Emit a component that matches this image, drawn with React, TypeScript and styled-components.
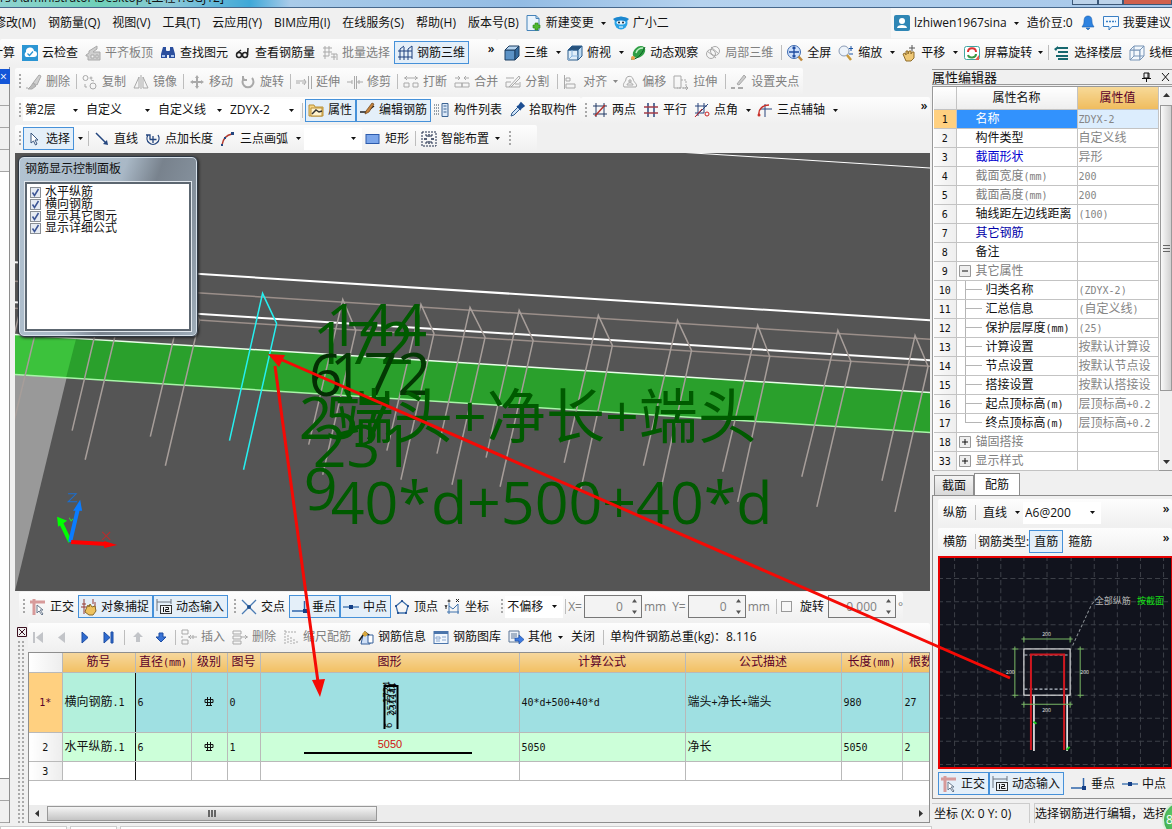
import React from "react";
import styled, { createGlobalStyle } from "styled-components";

const UI = '"Open Sans", "Noto Sans CJK SC", sans-serif';

const Global = createGlobalStyle`
  * { box-sizing: border-box; }
  html, body { margin: 0; padding: 0; }
  body { font: 12px/16px ${UI}; color: #111; background: #f0f0f0; overflow: hidden; }
  button, input, select { font: inherit; color: inherit; margin: 0; padding: 0; border: 0; background: none; border-radius: 0; }
`;

/* ---------- icons ---------- */

const G = "#a9a9a9";
const B = "#1f4e8c";

const icons: Record<string, React.ReactNode> = {
  cloud: (<><rect width="16" height="16" fill="#2b95d3" /><path d="M4 12a3 3 0 0 1 0-5 4 4 0 0 1 8-1 3 3 0 0 1 0 6z" fill="#fff" /><path d="M5.500 8.500l2 2 3.500-4" stroke="#2b95d3" fill="none" strokeWidth="1.300" /></>),
  slab: (<path d="M1 10l3-2V6l8-5v3l-4 3h7v8H3v-4H1zM6 10v3h3v-3zM11 10v3h2v-3z" fill="#cfcfcf" stroke={G} />),
  binoc: (<g fill="#2b4f9e"><path d="M3 2h3v3l1 2v6H1V9z" /><path d="M13 2h-3v3L9 7v6h6V9z" /><rect x="6" y="6" width="4" height="4" /><path d="M2 10h3v2H2zM11 10h3v2h-3z" fill="#a9c4f0" /></g>),
  glasses: (<g fill="none" stroke="#222" strokeWidth="1.500"><circle cx="4" cy="10" r="2.500" /><circle cx="10" cy="10" r="2.500" /><path d="M6 9.500h2M12.500 10L13 3M2 8l4-3" /></g>),
  batch: (<g fill="none" stroke={G}><path d="M1 3h9M1 7h9M1 11h6M3 1v13M7 1v10M9 9h6v6M9 12h5M12 9v6" /></g>),
  rebar3d: (<g fill="none" stroke="#1c3f7c"><path d="M1 6h14M1 12h14M3 4v11M7 2v13M11 4v11M15 1v13M3 4L7 1M11 4l4-3" /></g>),
  cube: (<g stroke="#1d3f63"><path d="M1 5h10v10H1z" fill="#5b92c6" /><path d="M1 5l4-4h10l-4 4z" fill="#b5d3ee" /><path d="M11 5l4-4v10l-4 4z" fill="#346a9e" /></g>),
  cubetop: (<g stroke="#2b5c8c"><path d="M1 5h10v10H1z" fill="#dfeefa" /><path d="M1 5l4-4h10l-4 4z" fill="#28527c" /><path d="M11 5l4-4v10l-4 4z" fill="#bfdcf4" /><path d="M5 5v6h6M5 11l-4 4" fill="none" stroke="#88b4dd" /></g>),
  orbit: (<><ellipse cx="9" cy="7" rx="7" ry="5" transform="rotate(-40 9 7)" fill="#2f9e44" /><path d="M6 8c1-3 4-5 7-5" stroke="#bff0c5" strokeWidth="1.500" fill="none" /><path d="M1 14c5 1 10-3 14-12" fill="none" stroke="#0d5e24" /><circle cx="3" cy="13" r="2" fill="#e8a14a" /></>),
  local3d: (<g fill="none" stroke={G}><circle cx="6" cy="9" r="4.500" /><circle cx="10" cy="6" r="4.500" /><path d="M2 6l9 7M6 2l8 7" /></g>),
  full: (<><circle cx="7" cy="7" r="6.500" fill="#cfe1fb" stroke="#3d6ab0" /><path d="M7 2v10M2 7h10M5.500 3.500L7 2l1.500 1.500M5.500 10.500L7 12l1.500-1.500" stroke="#1d4aa0" strokeWidth="1.300" fill="none" /><path d="M11.500 11.500l3.500 4" stroke="#c08a3c" strokeWidth="2.500" /></>),
  zoom: (<><circle cx="6" cy="6" r="5" fill="#edf3fa" stroke="#8a9bb5" /><path d="M9 10l4 5" stroke="#c99a3c" strokeWidth="2.500" /><path d="M13 1v5M11 3.500h4M11 9h4" stroke="#1b55a5" fill="none" /></>),
  pan: (<><path d="M2 9l2-1 1 2V6h2v3l1-3h2v3l1-2h2v6l-3 3H5z" fill="#efc875" stroke="#8f6d2b" /><path d="M8 3h6M11 0v6" stroke="#555" /></>),
  rotate3d: (<><rect x=".5" y="1.500" width="15" height="13" rx="2" fill="#fff" stroke="#3fa6a2" /><path d="M4 7c0-5 8-5 8 0" fill="none" stroke="#d33" strokeWidth="2" /><path d="M12 9c0 4-7 5-8 1" fill="none" stroke="#3a9a45" strokeWidth="2" /><path d="M11 15l4-5v5z" fill="#e65a4c" /></>),
  floors: (<path d="M3 2h11v2H3zM4 6h10v2H4zM2 10h12v2H2zM4 13h10v2H4zM0 4l4-3v2L2 6z" fill="#17686f" />),
  wire: (<g fill="#f3f8fd" stroke="#7895b7"><path d="M1 5h10v10H1z" /><path d="M1 5l4-4h10l-4 4zM11 5l4-4v10l-4 4z" /><path d="M5 1v10h10M5 11l-4 4" fill="none" /></g>),
  brush: (<><path d="M7 9l6-8 2 1-4 9z" fill="#d0d0d0" stroke={G} /><path d="M7 9l3 3-4 3H2l3-3zM0 14h2" stroke={G} fill="#bbb" /></>),
  copy: (<g fill="none" stroke={G}><circle cx="3.500" cy="4" r="2.500" /><circle cx="11" cy="12" r="3" /><circle cx="9" cy="4" r="1" /><path d="M3 10v3h2M9 6l3 1" /></g>),
  mirror: (<g fill="none" stroke={G}><path d="M6 3v11H1zM10 3v11h5zM8 1v14" /></g>),
  move: (<path d="M8 1l2 3H9v3h3V6l3 2-3 2V9H9v3h1l-2 3-2-3h1V9H4v1L1 8l3-2v1h3V4H6z" fill={G} />),
  rotate: (<path d="M4 4a5.500 5.500 0 1 0 8 0M3 2v4h4" fill="none" stroke={G} strokeWidth="2" />),
  extend: (<g fill="none" stroke={G}><path d="M0 7h9M0 9h4M6 9h3M8 5l2 3-2 3M12.500 2v13M15.500 2v13" /></g>),
  trim: (<g fill="none" stroke={G}><path d="M0 8h5M10 8h6M7.500 2v13M9.500 2v13M5 6v4M12 6v4" /></g>),
  brk: (<g fill="none" stroke={G}><path d="M1 4h14M1 9h5v4H1zM10 9h5v4h-5zM4 2L2 4l2 2M12 2l2 2-2 2" /></g>),
  merge: (<g fill="none" stroke={G}><path d="M1 4h5M10 4h5M1 9h7v4H1zM8 9h7v4H8zM4 2l2 2-2 2M12 2l-2 2 2 2" /></g>),
  split: (<g fill="none" stroke={G}><path d="M1 4h8M1 13V8h5M1 13h14V8M4 13L14 2l1 2-9 9M10 10h4" /></g>),
  align: (<g fill="none" stroke={G}><path d="M1.500 1v14M3 4h4v3H3zM3 10h9v4H3z" /></g>),
  offset: (<g fill="none" stroke={G}><path d="M2 13c-2-4 2-5 2-8s6-4 7 0 5 5 3 8z" /><path d="M5 11c0-3 6-3 6 0zM7 6h2v2H7z" /></g>),
  stretch: (<g fill="none" stroke={G}><path d="M1 2h7v12H1z" /><path d="M8 6h5v8H4" strokeDasharray="2 1" /><path d="M10 14h5M13 12l2 2-2 2" /></g>),
  grip: (<><path d="M6 10l7-9 2 2-7 8z" fill="#ccc" stroke={G} /><path d="M0 14h4M7 14h5" stroke={G} strokeWidth="2" /></>),
  prop: (<><path d="M1 3h5l1 2h8v9H1z" fill="#f7d684" stroke="#b98f36" /><path d="M3 6h11v8H3z" fill="#fff3cd" stroke="#b98f36" /><path d="M4 12l4-4 3 2 3-1" stroke="#333" fill="none" strokeWidth="1.500" /></>),
  edit: (<><path d="M1 10h6l8-6" stroke="#222" fill="none" strokeWidth="1.500" /><path d="M7 9l6-8 2 1-5 8-4 2z" fill="#c7843d" stroke="#6a4116" strokeWidth=".7" /></>),
  list: (<g fill="none"><path d="M0 3h5M0 6h5M0 9h5M0 12h5" stroke="#345" strokeDasharray="1 1" /><path d="M8 1.500h6v13H8z" fill="#dce9f8" stroke="#3b6393" /><path d="M9.500 4h3M9.500 7h3M9.500 10h3" stroke="#3b6393" /></g>),
  picker: (<><path d="M2 14l1-3 6-6 2 2-6 6z" fill="#cfe3f8" stroke="#305c8e" /><path d="M8 4l4 4M9 5l3-4 3 3-4 3z" fill="#1d4f93" stroke="#1d4f93" strokeWidth="1.500" /></>),
  twopt: (<g fill="none" stroke="#223a66"><path d="M1 4h14M1 12h14M4 1v14M12 1v14" /><path d="M3 14L13 3" stroke="#b3342e" strokeWidth="1.500" /></g>),
  para: (<g fill="none"><path d="M5 1v14M11 1v14" stroke="#28457d" strokeWidth="1.500" /><path d="M1 5h14M1 11h14" stroke="#a33b48" strokeWidth="1.500" /></g>),
  ptang: (<g fill="none" stroke="#28457d"><path d="M1 4h12M1 11h9M4 1v13M10 1v10M2 14L14 2" /><circle cx="13" cy="12" r="2" stroke="#c22" /><path d="M1 15L8 7" stroke="#c22" /></g>),
  arcaxis: (<g fill="none"><path d="M8 2v13M3 7h12" stroke="#28457d" /><path d="M2 13C1 7 6 3 12 3" stroke="#c9302a" strokeWidth="1.500" /><circle cx="2" cy="13" r="1.500" fill="#c9302a" /></g>),
  cursor: (<path d="M5 2v10l2.500-2 2 4 1.500-1-2-4h3z" fill="#fff" stroke="#39567f" />),
  line: (<><path d="M2 2l10 10" stroke="#24467f" strokeWidth="1.500" /><path d="M14 14l-5-1 4-4z" fill="#24467f" /></>),
  ptlen: (<g fill="none" stroke="#24467f" strokeWidth="1.300"><path d="M3 4a6 6 0 1 0 10 0M1 4h4v4" /><path d="M8 5v7M4.500 8.500h7" /></g>),
  arc3: (<g fill="none"><path d="M2 14C3 8 6 4 12 3" stroke="#b33a2e" strokeWidth="1.500" /><rect x="11" y="1" width="3" height="3" fill="#24467f" /><rect x="1" y="13" width="2" height="2" fill="#24467f" /><rect x="4" y="6" width="2" height="2" fill="#24467f" /></g>),
  rect: (<rect x="1" y="3.500" width="13" height="9" fill="#7ca6ea" stroke="#2d5bab" />),
  smart: (<g fill="none" stroke="#1f2d4a"><rect x="1" y="1" width="14" height="14" strokeDasharray="2 1" /><path d="M8 3v3M8 10v3M3 8h3M10 8h3" strokeWidth="1.300" /><path d="M4 4h2v2M12 4h-2v2M4 12h2v-2M12 12h-2v-2" /></g>),
  ortho: (<><path d="M0 3h15M4 0v16" stroke="#d79a9a" strokeWidth="3" fill="none" /><path d="M7 6v8l2-2 3 4 1-1-3-4h3z" fill="#fff" stroke="#69788c" /></>),
  snap: (<><path d="M3 0v15M0 8h6M12 0v5M1 5h4M14 3v9" stroke="#963a34" fill="none" /><path d="M5 10l2-4 1 2 1-3 2 3 3-1 1 5-3 4H8l-4-3z" fill="#edc25f" stroke="#8b6a28" /></>),
  dyn: (<g fill="none" stroke="#6b7480"><path d="M1 0v12M15 0v5M1 3h14" /><rect x="4.500" y="6.500" width="11" height="8" fill="#eef1f5" stroke="#333" /><path d="M7.500 8v5M9.500 8.500h3v2h-3v2h4" stroke="#111" /></g>),
  cross: (<><path d="M1 1l14 14M15 1L1 15" stroke="#4b7cb4" fill="none" strokeWidth="1.300" /><circle cx="8" cy="8" r="2" fill={B} /></>),
  perp: (<><path d="M0 12h15M12.500 2v10" stroke="#2f65aa" fill="none" strokeWidth="1.500" /><rect x="11" y="10" width="4" height="4" fill="#153f86" /></>),
  mid: (<><path d="M0 8h16" stroke="#4b7cb4" strokeWidth="1.500" /><rect x="6" y="6" width="4" height="4" fill="#153f86" /></>),
  vertex: (<><path d="M8 2l6 5-2 7H4L2 7z" fill="none" stroke="#3e72ad" strokeWidth="1.300" /><g fill="#153f86"><circle cx="8" cy="2" r="1" /><circle cx="14" cy="7" r="1" /><circle cx="12" cy="14" r="1" /><circle cx="4" cy="14" r="1" /><circle cx="2" cy="7" r="1" /></g></>),
  coord: (<g fill="none" stroke="#3e72ad"><path d="M4 4v11M2 13h12M4 7l4 3 5-5v10" /><path d="M11 0l3 3M14 0l-3 3M0 6l1 2 1-2M1 8v2" stroke="#222" /><circle cx="4" cy="2" r="1" stroke="#222" /></g>),
  first: (<path d="M2 3h2v11H2zM12 3v11L5 8.500z" fill="#c2c4c8" />),
  prev: (<path d="M11 3v11L4 8.500z" fill="#c2c4c8" />),
  next: (<path d="M5 3v11l6-5.500z" fill="#2f6bd0" stroke="#1e4ea3" />),
  last: (<path d="M4 3v11l6-5.500zM11 3h2v11h-2z" fill="#2f6bd0" stroke="#1e4ea3" />),
  up: (<path d="M8 3l5 5h-3v5H6V8H3z" fill="#c2c4c8" />),
  down: (<path d="M8 13l5-5h-3V4H6v4H3z" fill="#3a74d6" stroke="#1e4ea3" />),
  insert: (<g fill="none" stroke={G}><path d="M1 1h6v4H1zM1 11h6v4H1zM1 7v2M7 8h9M10 6L8 8l2 2M12 6v4" /></g>),
  remove: (<g fill="none" stroke={G}><path d="M1 2h8v3H1zM1 7h8v3H1zM1 12h8v3H1zM9 8h7M13 6l2 2-2 2" /></g>),
  scale: (<g fill="none" stroke={G}><path d="M2 1v14M2 3h11M5 6v9M8 8v7M11 10v5M14 12v3" strokeDasharray="2 1" /></g>),
  info: (<><path d="M5 6h7v9H3z" fill="#cfe0f7" stroke="#37609a" /><path d="M10 6h5v8h-5z" fill="#fff" stroke="#37609a" /><path d="M1 12l6-9 4 3" stroke="#1f1f1f" strokeWidth="1.500" fill="none" /><path d="M4 5l3 3 3-3-3-3z" fill="#d9a73b" /></>),
  lib: (<><rect x="1" y="2.500" width="14" height="12" fill="#f2f7fd" stroke="#4b75ab" /><path d="M1 4h14" stroke="#4b75ab" strokeWidth="2" /><path d="M3 8h4v2H3zM9 8h4M3 12h4M9 11h4" stroke="#8aa8d0" fill="none" /></>),
  other: (<><path d="M1 2h10v11H1z" fill="#eef3fa" stroke="#5c7696" /><path d="M3 5h6M3 7h6M3 9h4" stroke="#5c7696" /><path d="M7 9h4V6l5 4.500-5 4.500v-3H7z" fill="#3e7be0" stroke="#1e4ea3" strokeWidth=".7" /></>),
  newdoc: (<><path d="M1 .5h9l3 3v12H1z" fill="#eaf4fd" stroke="#4583b9" /><path d="M10 .5v3h3" fill="none" stroke="#4583b9" /><path d="M9 8h3v2h2v3h-2v2H9v-2H7v-3h2z" fill="#4eb830" stroke="#2d8319" strokeWidth=".6" /></>),
  robot: (<><ellipse cx="8" cy="8" rx="6.500" ry="6.500" fill="#2aa3e6" /><path d="M0 4c4-3 12-3 16 0l-2 2H2z" fill="#1b87cf" /><ellipse cx="8" cy="7.500" rx="4.500" ry="2" fill="#e8f6ff" /><circle cx="6" cy="7.500" r="1" fill="#123" /><circle cx="10" cy="7.500" r="1" fill="#123" /><path d="M6 12h4" stroke="#fff" /></>),
  user: (<><rect width="16" height="16" rx="2" fill="#2f86b5" /><circle cx="8" cy="6" r="3" fill="#fff" /><path d="M3 13c0-4 10-4 10 0z" fill="#fff" /></>),
  bell: (<path d="M8 1c3 0 4 2 4 6 0 2 1 3 2 5H2c1-2 2-3 2-5 0-4 1-6 4-6zM6 13h4l-2 2z" fill="#2d82e0" stroke="#1d60ad" strokeWidth=".6" />),
  chat: (<><path d="M.5 1.500h15v10H9l-3 3.500v-3.500H.5z" fill="#f5faff" stroke="#3a7fc4" /><path d="M3 6.500h10" stroke="#3a7fc4" strokeWidth="1.500" strokeDasharray="2 1" /></>),
};

const IconSvg = styled.svg`flex: none; display: block; overflow: visible;`;
const Icon = ({ n }: { n: string }) => (
  <IconSvg width="16" height="16" viewBox="0 0 16 16" aria-hidden="true">{icons[n]}</IconSvg>
);

const ArrowSvg = styled.svg`flex: none; display: block; pointer-events: none;`;
const Caret = ({ c = "#111" }: { c?: string }) => (
  <ArrowSvg width="5" height="3" viewBox="0 0 5 3"><path d="M0 0h5L2.500 3z" fill={c} /></ArrowSvg>
);

/* ---------- shared controls ---------- */

const Tool = styled.button<{ $active?: boolean; $muted?: boolean }>`
  display: flex; align-items: center; gap: 4px; flex: none;
  height: 23px; padding: 0 3px 0 2px; white-space: nowrap;
  border: 1px solid ${p => (p.$active ? "#4691d9" : "transparent")};
  background: ${p => (p.$active ? "#e4eff9" : "transparent")};
  color: ${p => (p.$muted ? "#808080" : "#111")};
`;
const WideTool = styled(Tool)`padding: 0 4px;`;
const Drop = styled.button<{ $tight?: boolean }>`
  display: flex; align-items: center; justify-content: center; flex: none;
  width: ${p => (p.$tight ? 8 : 12)}px; height: 23px;
`;
const Sep = styled.span`flex: none; width: 1px; height: 15px; margin: 0 2px; background: #bdbdbd;`;
const Grip = styled.span`
  flex: none; width: 2px; height: 15px; margin: 0 2px 0 4px;
  background: repeating-linear-gradient(#a8a8a8 0 2px, transparent 2px 4px);
`;
const Row = styled.div<{ $h: number }>`display: flex; align-items: center; height: ${p => p.$h}px; flex: none; overflow: hidden;`;
const Strip = styled.div<{ $grow?: boolean }>`
  display: flex; align-items: center; align-self: stretch; flex: ${p => (p.$grow ? "1 0 0" : "none")};
  margin: 1px 0; border-radius: 2px;
  background: linear-gradient(#fdfdfd, #f0f0f0); white-space: nowrap;
`;
const More = styled.button`flex: none; width: 12px; height: 20px; line-height: 12px; font-weight: 600; padding-bottom: 8px;`;
const Spring = styled.span`flex: 1 1 0;`;
const Pad = styled.span<{ $w: number }>`flex: none; width: ${p => p.$w}px;`;

const T = ({ i, t, active, muted, drop, tight }: { i?: string; t?: string; active?: boolean; muted?: boolean; drop?: boolean; tight?: boolean }) => (
  <>
    <Tool type="button" $active={active} $muted={muted} aria-label={t ? undefined : i}>{i && <Icon n={i} />}{t}</Tool>
    {drop && <Drop type="button" $tight={tight} aria-label={`${t} ▾`}><Caret c={muted ? "#888" : "#111"} /></Drop>}
  </>
);

const ComboBox = styled.span<{ $w: number }>`
  display: grid; grid-template-columns: 1fr 17px; align-items: center; justify-items: center; flex: none;
  width: ${p => p.$w}px; height: 22px; background: #fff;
  & > select { grid-area: 1 / 1 / 2 / 3; width: 100%; height: 22px; padding-left: 2px; appearance: none; outline: 0; }
  & > svg { grid-area: 1 / 2 / 2 / 3; }
`;
const Combo = ({ v, w, label }: { v: string; w: number; label: string }) => (
  <ComboBox $w={w}><select aria-label={label} defaultValue={v}><option>{v}</option></select><Caret /></ComboBox>
);

/* Latin runs inside the bitmap-style Chinese grid text use a half-width mono face */
const Mono = styled.span`font: 10px/12px "DejaVu Sans Mono", monospace;`;
const Mix = ({ t }: { t: string }) => (
  <>{t.split(/([\x20-\x7e]+)/).map((s, i) => (i % 2 ? <Mono key={i}>{s}</Mono> : s))}</>
);

/* ---------- window top ---------- */

const Page = styled.div`position: relative; display: flex; flex-direction: column; min-height: 100vh; overflow: hidden;`;
const TitleBar = styled.div`
  display: flex; align-items: flex-end; justify-content: space-between; height: 8px; overflow: hidden; flex: none;
  padding-bottom: 2px; border-bottom: 1px solid #47688c;
  background: linear-gradient(90deg, #8ed3d0 0, #6fd0b8 100px, #8cc9d8 170px, #3fa8d8 250px, #a9cbe9 290px, #93bce4 520px, #b5d2ee 700px, #a7c8ea 100%);
`;
const TitleText = styled.span`font-size: 12px; line-height: 14px; white-space: nowrap;`;
const WinButtons = styled.span`
  display: flex; height: 12px; width: 100px;
  & > i { flex: 1; border: 1px solid #3c5878; background: #bcd3ea; }
  & > i:last-child { flex: 2; background: #d0604c; }
`;
const MenuItem = styled.button`flex: none; white-space: nowrap; height: 22px;`;
const MenuPack = styled.div`display: flex; align-items: center; align-self: stretch; flex: 1; overflow: hidden;`;
const PullLeft = styled.div`display: flex; flex: none; gap: 12px; margin: 0 4px 0 -6px;`;
const Account = styled.div`display: flex; align-items: center; align-self: stretch; flex: none; width: 281px; background: #f7f7f7; white-space: nowrap; overflow: hidden;`;
const Bean = styled.span`margin: 0 4px;`;
const CutLabel = styled.span`width: 19px; display: flex; justify-content: flex-end; padding-right: 4px; overflow: hidden;`;

const TopBars = () => (
  <>
    <TitleBar><TitleText>rs\Administrator\Desktop\[工程1.GGJ12]</TitleText><WinButtons><i /><i /><i /></WinButtons></TitleBar>
    <Row $h={30}>
      <MenuPack>
        <PullLeft>
          {["修改(M)", "钢筋量(Q)", "视图(V)", "工具(T)", "云应用(Y)", "BIM应用(I)", "在线服务(S)", "帮助(H)", "版本号(B)"].map(m => <MenuItem key={m} type="button">{m}</MenuItem>)}
        </PullLeft>
        <T i="newdoc" t="新建变更" drop /><T i="robot" t="广小二" />
      </MenuPack>
      <Account>
        <T i="user" t="lzhiwen1967sina" drop /><Bean>造价豆:0</Bean><T i="bell" /><T i="chat" t="我要建议" />
      </Account>
    </Row>
    <Row $h={29}>
      <Strip>
        <CutLabel>计算</CutLabel>
        <T i="cloud" t="云检查" /><T i="slab" t="平齐板顶" muted /><T i="binoc" t="查找图元" /><T i="glasses" t="查看钢筋量" />
        <T i="batch" t="批量选择" muted /><T i="rebar3d" t="钢筋三维" active /><Pad $w={16} /><More type="button" aria-label="更多">»</More>
      </Strip>
      <Strip $grow>
        <Pad $w={4} />
        <T i="cube" t="三维" drop /><T i="cubetop" t="俯视" drop /><T i="orbit" t="动态观察" /><T i="local3d" t="局部三维" muted /><Pad $w={2} /><Sep />
        <T i="full" t="全屏" /><T i="zoom" t="缩放" drop /><T i="pan" t="平移" drop /><T i="rotate3d" t="屏幕旋转" drop tight /><Pad $w={2} /><Sep />
        <T i="floors" t="选择楼层" /><T i="wire" t="线框" />
      </Strip>
    </Row>
  </>
);

/* ---------- left dock ---------- */

const Body = styled.div`display: flex; flex: 1; min-height: 0;`;
const Left = styled.div`display: flex; flex-direction: column; flex: 1; min-width: 0;`;
const LeftMain = styled.div`display: flex; flex: 1; min-height: 0;`;
const Dock = styled.div`
  display: flex; flex-direction: column; width: 10px; flex: none; margin-right: 5px; padding-top: 2px; border-right: 1px solid #8e8e8e;
  & > i { display: block; flex: none; border-bottom: 1px solid #a5a5a5; height: 22px; }
  & > b { flex: 1; background: #fff; border-bottom: 1px solid #8e8e8e; }
`;
const DockClose = styled.button`width: 10px; height: 15px; flex: none; background: #1456d8; color: #fff; line-height: 12px; text-align: left; overflow: hidden;`;
const Center = styled.main`display: flex; flex-direction: column; flex: 1; min-width: 0; margin-right: 2px;`;

/* ---------- 3D viewport ---------- */

const View = styled.section`position: relative; flex: 1 0 437px; background: #555; overflow: hidden;`;
const Scene = styled.svg`position: absolute; inset: 0; width: 100%; height: 100%; display: block;`;

const cages = [
  [28, 278, 41, 309, -8, 424, 6, 454],
  [107, 283, 120, 314, 72, 430, 85, 459], [185, 289, 199, 320, 150, 436, 165, 465],
  [342, 299, 355, 330, 308, 444, 322, 474], [420, 304, 433, 333, 386, 450, 400, 479],
  [469, 307, 484, 337, 436, 453, 451, 484], [518, 310, 532, 340, 485, 457, 499, 486],
  [597, 315, 611, 345, 563, 462, 579, 491], [676, 320, 690, 350, 642, 465, 658, 495],
  [756, 325, 768, 356, 721, 471, 736, 501], [836, 330, 849, 361, 800, 476, 815, 506], [913, 335, 926, 366, 880, 480, 893, 511],
];

const Viewport = () => (
  <View>
    <Scene viewBox="15 153 915 437" preserveAspectRatio="xMinYMin slice">
      <path d="M15 334L76 338 15 590z" fill="#999" />
      <path d="M15 334L930 392V432L15 374z" fill="#2aa02c" />
      <path d="M15 334L76 338 66 377 15 374z" fill="#3cc23c" />
      <g stroke="#fff" strokeWidth="2" fill="none">
        <path d="M15 262L930 320M15 302L930 360" />
        <path d="M660 151L930 168" strokeWidth="1" />
        <path d="M15 334L930 392" stroke="#e9ffe9" strokeWidth="1.500" /><path d="M15 374L930 432" stroke="#a8f5a8" strokeWidth="1.500" />
      </g>
      <path d="M15 281L930 339M15 308L930 366" stroke="#9b8f8a" strokeWidth="1.500" />
      <g fill="none" stroke="#a79e9a" strokeWidth="1.500">
        {cages.map(([ax, ay, sx, sy, lx, ly, rx, ry]) => <path key={ax} d={`M${lx} ${ly}L${ax} ${ay}L${sx} ${sy}L${rx} ${ry}`} />)}
      </g>
      <path d="M229 440L262 293 276 323 243 469" fill="none" stroke="#25f0f0" strokeWidth="1.500" />
      <g fill="#005a00" fontSize="59" fontFamily={UI}>
        <text x="325" y="346">144</text><text x="312" y="364">172</text>
        <text x="308" y="395" fill="#032e03">6</text><text x="329" y="394" fill="#033803">172</text>
        <text x="298" y="438">2</text><text x="324" y="438">57</text><text x="312" y="466">231</text>
        <text x="303" y="509">9</text>
        <text x="334" y="437">端头+净长+端头</text><text x="330" y="523">40*d+500+40*d</text>
      </g>
      <path d="M70 541L60 520" stroke="#0f0" strokeWidth="4" /><path d="M57 516l1 10 9-6z" fill="#0f0" />
      <path d="M70 541L78 507" stroke="#0a7cff" strokeWidth="4" /><path d="M80 499l-7 11h9z" fill="#0a7cff" />
      <path d="M71 541L106 543" stroke="#f00" strokeWidth="4" /><path d="M117 544l-13-4v7z" fill="#f00" />
      <path d="M68 493h8l-8 8h9" fill="none" stroke="#1b6fd0" /><path d="M102 531l8 8M110 531l-8 8" stroke="#b92c2c" /><path d="M69 517l2 3 2-2" fill="none" stroke="#3c3" />
    </Scene>
    <Panel />
  </View>
);

const PanelBox = styled.div`
  position: absolute; left: 3px; top: 3px; width: 180px; height: 181px; padding: 0 6px 5px; border-radius: 6px;
  display: flex; flex-direction: column; border: 1px solid #2e3742;
  background: linear-gradient(110deg, #b2c3d2 0, #a9b8c6 45%, #78828d 60%, #87939f 80%, #9fadb9 100%);
  box-shadow: inset 0 0 0 1px #d7e1ea, 1px 1px 3px #222;
`;
const PanelTitle = styled.h2`margin: 0; padding: 4px 0; font-size: 12px; line-height: 16px; height: 25px; font-weight: 400;`;
const PanelList = styled.div`
  flex: 1; padding: 2px 3px; background: #fff; border: 2px solid #5c6670; outline: 1px solid #e2e8ee;
  & > label { display: flex; align-items: center; gap: 4px; height: 12px; line-height: 12px; white-space: nowrap; }
  & input { appearance: none; width: 11px; height: 11px; border: 1px solid #8a8f95; background: #e6ebf2; }
  & label > span { display: grid; }
  & label > span > * { grid-area: 1 / 1; }
`;
const Panel = () => (
  <PanelBox>
    <PanelTitle>钢筋显示控制面板</PanelTitle>
    <PanelList>
      {["水平纵筋", "横向钢筋", "显示其它图元", "显示详细公式"].map(s => (
        <label key={s}><span><input type="checkbox" defaultChecked /><ArrowSvg width="11" height="11" viewBox="0 0 11 11"><path d="M2.500 5.500l2 3 4-6.500" fill="none" stroke="#3c5595" strokeWidth="1.500" /></ArrowSvg></span>{s}</label>
      ))}
    </PanelList>
  </PanelBox>
);

/* ---------- snap bar ---------- */

const SpinBox = styled.label<{ $w: number }>`
  display: flex; align-items: center; gap: 2px; color: #808080; flex: none;
  & > span { display: flex; align-items: center; width: ${p => p.$w}px; height: 23px; border: 1px solid #777; background: #f3f3f3; padding-right: 3px; }
  & input { flex: 1; min-width: 0; text-align: right; padding-right: 8px; outline: 0; }
`;
const Spin = ({ pre, v, w, post }: { pre?: string; v: string; w: number; post: string }) => (
  <SpinBox $w={w}>{pre}<span><input defaultValue={v} aria-label={pre || "旋转角度"} />
    <ArrowSvg width="7" height="15" viewBox="0 0 7 15"><path d="M1 3.500L3.500 0 6 3.500zM1 11.500L3.500 15 6 11.500z" fill="#555" /></ArrowSvg></span>{post}</SpinBox>
);
const CheckLabel = styled.label`
  display: flex; align-items: center; gap: 8px; margin: 0 4px 0 2px;
  & > input { appearance: none; width: 11px; height: 11px; border: 1px solid #999; background: #f7f7f7; }
`;

const SnapBar = () => (
  <Row $h={31}>
    <Pad $w={4} />
    <Strip>
      <Grip /><T i="ortho" t="正交" /><T i="snap" t="对象捕捉" active /><T i="dyn" t="动态输入" active />
      <Pad $w={2} /><Grip /><T i="cross" t="交点" /><T i="perp" t="垂点" active /><T i="mid" t="中点" active /><T i="vertex" t="顶点" /><T i="coord" t="坐标" />
      <Pad $w={4} /><Grip /><Combo v="不偏移" w={58} label="偏移方式" /><Sep />
      <Spin pre="X=" v="0" w={58} post="mm" /><Pad $w={6} /><Spin pre="Y=" v="0" w={58} post="mm" />
      <Pad $w={4} /><Sep /><CheckLabel><input type="checkbox" />旋转</CheckLabel><Spin v="0.000" w={68} post="°" />
    </Strip>
  </Row>
);

/* ---------- rebar grid ---------- */

const Lower = styled.section`display: flex; flex: none;`;
const Handle = styled.div`
  width: 13px; flex: none; display: flex; flex-direction: column; align-items: center; padding-top: 5px; gap: 4px;
  & > i { flex: 1; width: 7px; background: radial-gradient(circle at 1px 1px, #aaa 1px, transparent 1px) 0 0 / 4px 4px; }
`;
const HandleClose = styled.button`width: 10px; height: 10px; & > svg { display: block; }`;
const LowerMain = styled.div`flex: 1; min-width: 0;`;
const GridBox = styled.div`display: flex; flex-direction: column; height: 171px; background: #fff; border: 1px solid #8e8e8e; overflow: hidden;`;
const GridClip = styled.div`flex: 1; overflow: hidden;`;
const Table = styled.table`
  border-collapse: collapse; table-layout: fixed; width: 911px; line-height: 14px;
  th, td { padding: 0; border: 1px solid #b9b9b9; border-width: 0 1px 1px 0; white-space: nowrap; overflow: hidden; }
  th { font-weight: 400; text-align: center; }
  thead th { height: 19px; color: #5a0028; background: linear-gradient(#f6d79c, #f2c063); }
  thead th:first-child, tbody th { background: linear-gradient(90deg, #fff, #ededed); }
  td { padding-left: 2px; }
  td.c { padding: 0; text-align: center; }
  td.c svg { display: block; margin: 0 auto; }
  td:nth-child(2) { border-right-color: #111; }
`;
const Col = styled.col<{ $w: number }>`width: ${p => p.$w}px;`;
const BodyRow = styled.tr<{ $h: number; $bg: string; $first?: string }>`
  height: ${p => p.$h}px;
  & > td { background: ${p => p.$bg}; }
  & > td:nth-child(2) { background: ${p => p.$first || p.$bg}; }
  && > th { ${p => (p.$first ? "background: #ffd080; color: #5a0028;" : "")} }
`;
const HScroll = styled.div`
  display: flex; align-items: center; height: 17px; flex: none; background: #ececec; padding: 0 6px; justify-content: space-between;
  & > svg { flex: none; }
`;
const HThumb = styled.div`
  width: 330px; height: 15px; margin: 0 auto 0 8px; border: 1px solid #989898; background: linear-gradient(#f5f5f5, #dcdcdc 50%, #c4c4c4);
  display: flex; align-items: center; justify-content: center; gap: 1px;
  & > i { width: 2px; height: 7px; background: #666; }
`;
const NavSet = styled.div`display: flex;`;
const Weight = styled.span`margin-left: 4px;`;
const Level = () => (
  <svg width="10" height="10" viewBox="0 0 10 10"><path d="M1 2.500h8v3H1zM3.500 0v9M6.500 0v9M2 8.500h6" fill="none" stroke="#111" /></svg>
);

const Grid = () => (
  <Lower>
    <Handle><HandleClose type="button" aria-label="关闭面板"><svg width="10" height="10" viewBox="0 0 10 10"><path d="M.5.500h9v9h-9zM2 2l6 6M8 2L2 8" fill="none" stroke="#3c1020" /></svg></HandleClose><i /></Handle>
    <LowerMain>
      <Row $h={30}>
        <Strip $grow>
          <NavSet><T i="first" /><T i="prev" /><T i="next" /><T i="last" /></NavSet><Pad $w={2} /><Sep /><NavSet><T i="up" /><T i="down" /></NavSet><Sep />
          <T i="insert" t="插入" muted /><T i="remove" t="删除" muted /><T i="scale" t="缩尺配筋" muted /><T i="info" t="钢筋信息" /><T i="lib" t="钢筋图库" />
          <T i="other" t="其他" drop tight /><Pad $w={4} /><T t="关闭" /><Pad $w={2} /><Sep /><Weight>单构件钢筋总重(kg)：8.116</Weight>
        </Strip>
      </Row>
      <GridBox>
        <GridClip>
          <Table>
            <colgroup>{[33, 73, 56, 36, 33, 259, 166, 156, 61, 38].map((w, i) => <Col key={i} $w={w} />)}</colgroup>
            <thead><tr>{["", "筋号", "直径(mm)", "级别", "图号", "图形", "计算公式", "公式描述", "长度(mm)", "根数"].map((h, i) => <th key={i} scope="col"><Mix t={h} /></th>)}</tr></thead>
            <tbody>
              <BodyRow $h={60} $bg="#9fe0e2" $first="#b3f0dc">
                <th scope="row"><Mix t="1*" /></th><td><Mix t="横向钢筋.1" /></td><td><Mix t="6" /></td><td className="c"><Level /></td><td><Mix t="0" /></td>
                <td className="c"><svg width="258" height="59" viewBox="0 0 258 59">
                  <path d="M123.500 56V13h13v43" fill="none" stroke="#000" strokeWidth="2" />
                  <g fontSize="9" fontFamily='"DejaVu Sans Mono", monospace' transform="rotate(-90)"><text x="-55" y="131">6</text><text x="-43" y="133">257231</text><text x="-42" y="135">231144</text><text x="-30" y="129">1724</text></g>
                </svg></td>
                <td><Mix t="40*d+500+40*d" /></td><td><Mix t="端头+净长+端头" /></td><td><Mix t="980" /></td><td><Mix t="27" /></td>
              </BodyRow>
              <BodyRow $h={29} $bg="#ccffd9">
                <th scope="row"><Mix t="2" /></th><td><Mix t="水平纵筋.1" /></td><td><Mix t="6" /></td><td className="c"><Level /></td><td><Mix t="1" /></td>
                <td className="c"><svg width="258" height="28" viewBox="0 0 258 28"><path d="M43 20h168" stroke="#000" strokeWidth="2" /><text x="129" y="15" textAnchor="middle" fontSize="11" fontFamily='"Liberation Sans", sans-serif' fill="#d01010">5050</text></svg></td>
                <td><Mix t="5050" /></td><td>净长</td><td><Mix t="5050" /></td><td><Mix t="2" /></td>
              </BodyRow>
              <BodyRow $h={19} $bg="#fff"><th scope="row"><Mix t="3" /></th>{Array.from({ length: 9 }, (_, i) => <td key={i} />)}</BodyRow>
            </tbody>
          </Table>
        </GridClip>
        <HScroll>
          <svg width="4" height="7" viewBox="0 0 4 7"><path d="M4 0v7L0 3.500z" fill="#333" /></svg>
          <HThumb><i /><i /><i /></HThumb>
          <svg width="4" height="7" viewBox="0 0 4 7"><path d="M0 0v7l4-3.500z" fill="#333" /></svg>
        </HScroll>
      </GridBox>
    </LowerMain>
  </Lower>
);

/* ---------- property editor ---------- */

const Side = styled.aside`display: flex; flex-direction: column; width: 240px; flex: none; padding-top: 2px;`;
const SideHead = styled.header`
  display: flex; align-items: center; justify-content: space-between; height: 16px; flex: none; border: 1px solid #999; border-width: 1px 0; padding-right: 2px; overflow: hidden;
  & > h2 { margin: 0; font-size: 13px; line-height: 14px; font-weight: 400; }
  & > span { display: flex; gap: 10px; }
`;
const PropBox = styled.div`display: flex; flex: none; margin-top: 1px; border: 1px solid #999; border-right: 0; background: #fff; height: 385px; padding-left: 1px;`;
const PropTable = styled.table`
  flex: none; border-collapse: collapse; table-layout: fixed; width: 224px; line-height: 14px; align-self: flex-start;
  th, td { padding: 0; height: 19px; border: 1px solid #c3c3c3; border-width: 0 1px 1px 0; white-space: nowrap; overflow: hidden; }
  th { font-weight: 400; text-align: center; background: linear-gradient(90deg, #fafafa, #eee); }
  thead th { height: 22px; background: linear-gradient(#fff, #eee); }
  thead th:last-child { background: linear-gradient(#f7d998, #efbc5e); color: #5a0028; }
  td:last-child { padding-left: 1px; color: #858585; }
`;
const PropRow = styled.tr<{ $sel?: boolean; $c: string }>`
  && > th { ${p => (p.$sel ? "background: #ffd080;" : "")} }
  & > td:nth-child(2) { color: ${p => p.$c}; background: ${p => (p.$sel ? "#3292fd" : "#fff")}; }
  && > td:last-child { background: ${p => (p.$sel ? "#dcedfd" : "#fff")}; }
`;
const NameCell = styled.div`display: flex; align-items: center; height: 18px;`;
const Gutter = styled.span`width: 19px; flex: none; display: flex; padding-left: 2px;`;
const Tree = styled.svg`display: block; flex: none;`;
const Expander = styled.button`width: 12px; height: 12px; & > svg { display: block; }`;
const VScroll = styled.div`
  width: 12px; flex: none; display: flex; flex-direction: column; align-items: center; background: #f0f0f0; margin-left: auto; padding: 6px 0;
  & > div { width: 12px; height: 286px; margin: 8px 0 auto; border: 1px solid #999; background: linear-gradient(90deg, #fafafa, #d0d0d0); display: flex; align-items: center; justify-content: center; }
`;

type P = [string, string, string, string?];
const props: P[] = [
  ["1", "名称", "ZDYX-2", "#fff"], ["2", "构件类型", "自定义线"], ["3", "截面形状", "异形", "#0000d0"], ["4", "截面宽度(mm)", "200", "#808080"],
  ["5", "截面高度(mm)", "200", "#808080"], ["6", "轴线距左边线距离", "(100)"], ["7", "其它钢筋", "", "#0000a8"], ["8", "备注", ""],
  ["9", "-其它属性", "", "#808080"], ["10", ">归类名称", "(ZDYX-2)"], ["11", ">汇总信息", "(自定义线)"], ["12", ">保护层厚度(mm)", "(25)"],
  ["13", ">计算设置", "按默认计算设"], ["14", ">节点设置", "按默认节点设"], ["15", ">搭接设置", "按默认搭接设"], ["16", ">起点顶标高(m)", "层顶标高+0.2"],
  ["17", ">终点顶标高(m)", "层顶标高+0.2"], ["18", "+锚固搭接", "", "#808080"], ["33", "+显示样式", "", "#808080"],
];

const Name = ({ t, last }: { t: string; last: boolean }) => {
  const k = t[0];
  const label = "-+>".includes(k) ? t.slice(1) : t;
  return (
    <NameCell>
      {k === ">" ? <Tree width="29" height="19" viewBox="0 0 29 19"><path d={`M8.500 0V${last ? 9 : 19}M8 9.500h17`} stroke="#b5b5b5" fill="none" /></Tree> : (
        <Gutter>{(k === "-" || k === "+") && <Expander type="button" aria-label={label}><svg width="12" height="12" viewBox="0 0 12 12"><path d="M.5.500h11v11H.5z" fill="#eee" stroke="#999" /><path d={k === "-" ? "M3 6h6" : "M3 6h6M6 3v6"} stroke="#111" /></svg></Expander>}</Gutter>
      )}
      <span><Mix t={label} /></span>
    </NameCell>
  );
};

const Tabs = styled.div`display: flex; align-items: flex-end; height: 24px; padding-left: 2px; flex: none;`;
const Tab = styled.button<{ $on?: boolean }>`
  width: ${p => (p.$on ? 46 : 40)}px; height: ${p => (p.$on ? 22 : 20)}px; border: 1px solid #8e8e8e; border-bottom: 0;
  background: ${p => (p.$on ? "#fff" : "linear-gradient(#f4f4f4, #d9d9d9)")};
`;
const TabBody = styled.div`display: flex; flex-direction: column; flex: 1; min-height: 0; border: 1px solid #8e8e8e; border-right: 0; padding-left: 5px; padding-top: 2px;`;
const Cad = styled.svg`display: block; flex: 1 1 0; min-height: 0; width: 100%; background: #11131d;`;
const Status = styled.footer`
  display: flex; height: 30px; gap: 4px; flex: none; padding: 4px 0 6px; white-space: nowrap; overflow: hidden;
  & > span { border: 1px solid #ccc; border-width: 1px 1px 0 0; padding-left: 2px; line-height: 19px; width: 98px; flex: none; }
  & > span:last-child { flex: 1; border-left-width: 1px; padding-left: 0; }
`;
const Ball = styled.div`
  position: absolute; right: -28px; bottom: -10px; width: 38px; height: 38px; border-radius: 50%;
  background: radial-gradient(circle at 60% 40%, #7fe07f, #2ea043); border: 2px solid #d9efd9; color: #fff; padding: 9px 2px; font-size: 12px; line-height: 16px;
`;

const gx = [954, 977, 1000, 1023, 1046, 1070, 1093, 1116, 1139, 1162];
const gy = [578, 601, 624, 648, 671, 694, 717, 740, 763];

const Editor = () => (
  <Side>
    <SideHead><h2>属性编辑器</h2><span>
      <svg width="9" height="10" viewBox="0 0 9 10"><path d="M2 1h5v5H2zM0 6.500h9M4.500 6v4M6 1v5" fill="none" stroke="#111" /></svg>
      <svg width="9" height="10" viewBox="0 0 9 10"><path d="M1 1l7 8M8 1L1 9" stroke="#111" /></svg>
    </span></SideHead>
    <PropBox>
      <PropTable>
        <colgroup><Col $w={22} /><Col $w={121} /><Col $w={81} /></colgroup>
        <thead><tr><th aria-label="序号" /><th scope="col">属性名称</th><th scope="col">属性值</th></tr></thead>
        <tbody>
          {props.map(([n, name, v, c]) => (
            <PropRow key={n} $sel={n === "1"} $c={c || "#111"}><th scope="row"><Mix t={n} /></th><td><Name t={name} last={n === "17"} /></td><td><Mix t={v} /></td></PropRow>
          ))}
        </tbody>
      </PropTable>
      <VScroll>
        <svg width="7" height="4" viewBox="0 0 7 4"><path d="M0 4h7L3.500 0z" fill="#333" /></svg>
        <div><svg width="7" height="8" viewBox="0 0 7 8"><path d="M0 1.500h7M0 4.500h7M0 7.500h7" stroke="#666" /></svg></div>
        <svg width="7" height="4" viewBox="0 0 7 4"><path d="M0 0h7L3.500 4z" fill="#333" /></svg>
      </VScroll>
    </PropBox>
    <Tabs role="tablist"><Tab type="button" role="tab">截面</Tab><Tab type="button" role="tab" $on>配筋</Tab></Tabs>
    <TabBody>
      <Row $h={29}><Strip $grow><Pad $w={2} /><T t="纵筋" /><Pad $w={2} /><Sep /><Pad $w={2} /><T t="直线" drop /><Combo v="A6@200" w={78} label="钢筋规格" /><Spring /><More type="button" aria-label="更多纵筋">»</More></Strip></Row>
      <Row $h={29}><Strip $grow><Pad $w={2} /><T t="横筋" /><Pad $w={2} /><Sep /><span>钢筋类型:</span><WideTool type="button" $active>直筋</WideTool><WideTool type="button">箍筋</WideTool><Spring /><More type="button" aria-label="更多横筋">»</More></Strip></Row>
      <Cad viewBox="938 556 234 212" preserveAspectRatio="xMinYMin slice">
        <g stroke="#3d4048" strokeDasharray="5 3">{gx.map(x => <path key={x} d={`M${x}.5 556V769`} />)}{gy.map(y => <path key={y} d={`M938 ${y}.5H1172`} />)}</g>
        <path d="M1033.500 695V750M1066.500 695V750" stroke="#fff" strokeWidth="1.500" />
        <rect x="1023.500" y="648.500" width="46" height="46" fill="none" stroke="#fff" />
        <path d="M1024 654.500h45M1024 688.500h45" stroke="#b9c2cc" strokeDasharray="3 2" />
        <path d="M1030.500 749V654h33v95" fill="none" stroke="#cf1820" strokeWidth="2" />
        <g fill="none" stroke="#79b865"><path d="M1021 638.500h51M1023.500 636v6M1069.500 636v6M1014.500 646v51M1012 648.500h6M1012 694.500h6M1079.500 646v51M1077 648.500h6M1077 694.500h6M1021 703.500h51M1023.500 701v6M1069.500 701v6" /><path d="M1033 721l3 2M1066 749l3-3" stroke="#1ec81e" strokeWidth="2" /></g>
        <path d="M1072 645L1091 604l4-4" fill="none" stroke="#8a8f94" strokeDasharray="3 2" />
        <g fontSize="5" fill="#eee" textAnchor="middle" fontFamily={UI}><text x="1046" y="636">200</text><text x="1010" y="673">200</text><text x="1084" y="673">200</text><text x="1046" y="711">200</text></g>
        <g fontSize="9" fontFamily={UI}><text x="1094" y="604" fill="#b5b5b5">全部纵筋</text><text x="1136" y="604" fill="#16e016">按截面</text></g>
        <rect x="939" y="557" width="232" height="210" fill="none" stroke="#e80000" strokeWidth="2" />
      </Cad>
      <Row $h={29}><T i="ortho" t="正交" active /><T i="dyn" t="动态输入" active /><Pad $w={4} /><T i="perp" t="垂点" /><T i="mid" t="中点" /></Row>
    </TabBody>
    <Status><span>坐标 (X: 0 Y: 0)</span><span>选择钢筋进行编辑，选择钢筋</span></Status>
  </Side>
);

const BottomEdge = styled.div`
  display: flex; gap: 3px; height: 6px; flex: none; padding-top: 3px;
  & > i { height: 3px; border: 1px solid #ccc; border-bottom: 0; background: #fff; flex: 1; }
  & > i:nth-child(1) { flex: 0 0 67px; }
  & > i:nth-child(2) { flex: 0 0 47px; }
`;

/* ---------- red call-out arrows over the window ---------- */

const Marks = styled.svg`position: absolute; left: 0; top: 0; pointer-events: none;`;
const CallOuts = () => (
  <Marks width="1172" height="829" viewBox="0 0 1172 829" aria-hidden="true">
    <path d="M1010 678L280 359M275 366L318 682" stroke="#f50a05" strokeWidth="3" />
    <path d="M268 354l17 1-6 12zM320 697l-8-17 13-1z" fill="#f50a05" />
  </Marks>
);

export default function App() {
  return (
    <Page>
      <Global />
      <TopBars />
      <Body>
        <Left>
          <LeftMain>
            <Dock><DockClose type="button" aria-label="关闭停靠栏">×</DockClose><i /><i /><i /><i /><b /><i /><i /></Dock>
            <Center>
              <Row $h={29}><Strip>
                <Grip /><T i="brush" t="删除" muted /><Sep /><T i="copy" t="复制" muted /><T i="mirror" t="镜像" muted /><Sep /><T i="move" t="移动" muted /><T i="rotate" t="旋转" muted /><Sep />
                <T i="extend" t="延伸" muted /><T i="trim" t="修剪" muted /><Sep /><T i="brk" t="打断" muted /><T i="merge" t="合并" muted /><T i="split" t="分割" muted /><Pad $w={2} /><Sep />
                <T i="align" t="对齐" muted drop tight /><T i="offset" t="偏移" muted /><T i="stretch" t="拉伸" muted /><Pad $w={2} /><Sep /><T i="grip" t="设置夹点" muted />
              </Strip></Row>
              <Row $h={28}>
                <Strip>
                  <Grip /><Combo v="第2层" w={61} label="楼层" /><Combo v="自定义" w={72} label="构件类别" /><Combo v="自定义线" w={72} label="构件类型" /><Combo v="ZDYX-2" w={72} label="构件" /><Sep />
                  <T i="prop" t="属性" active /><T i="edit" t="编辑钢筋" active /><T i="list" t="构件列表" /><T i="picker" t="拾取构件" />
                </Strip>
                <Strip $grow><Grip /><T i="twopt" t="两点" /><T i="para" t="平行" /><T i="ptang" t="点角" drop /><T i="arcaxis" t="三点辅轴" drop /><Spring /><More type="button" aria-label="更多工具">»</More></Strip>
              </Row>
              <Row $h={29}><Strip>
                <Grip /><T i="cursor" t="选择" active /><Drop type="button" aria-label="选择方式"><Caret /></Drop><Sep /><T i="line" t="直线" /><T i="ptlen" t="点加长度" /><T i="arc3" t="三点画弧" drop />
                <Combo v="" w={58} label="画弧方式" /><T i="rect" t="矩形" /><Sep /><T i="smart" t="智能布置" drop tight /><Pad $w={4} /><Grip /><Pad $w={24} />
              </Strip></Row>
              <Viewport />
              <SnapBar />
              <Grid />
            </Center>
          </LeftMain>
          <BottomEdge><i /><i /><i /></BottomEdge>
        </Left>
        <Editor />
      </Body>
      <Ball>8</Ball>
      <CallOuts />
    </Page>
  );
}
